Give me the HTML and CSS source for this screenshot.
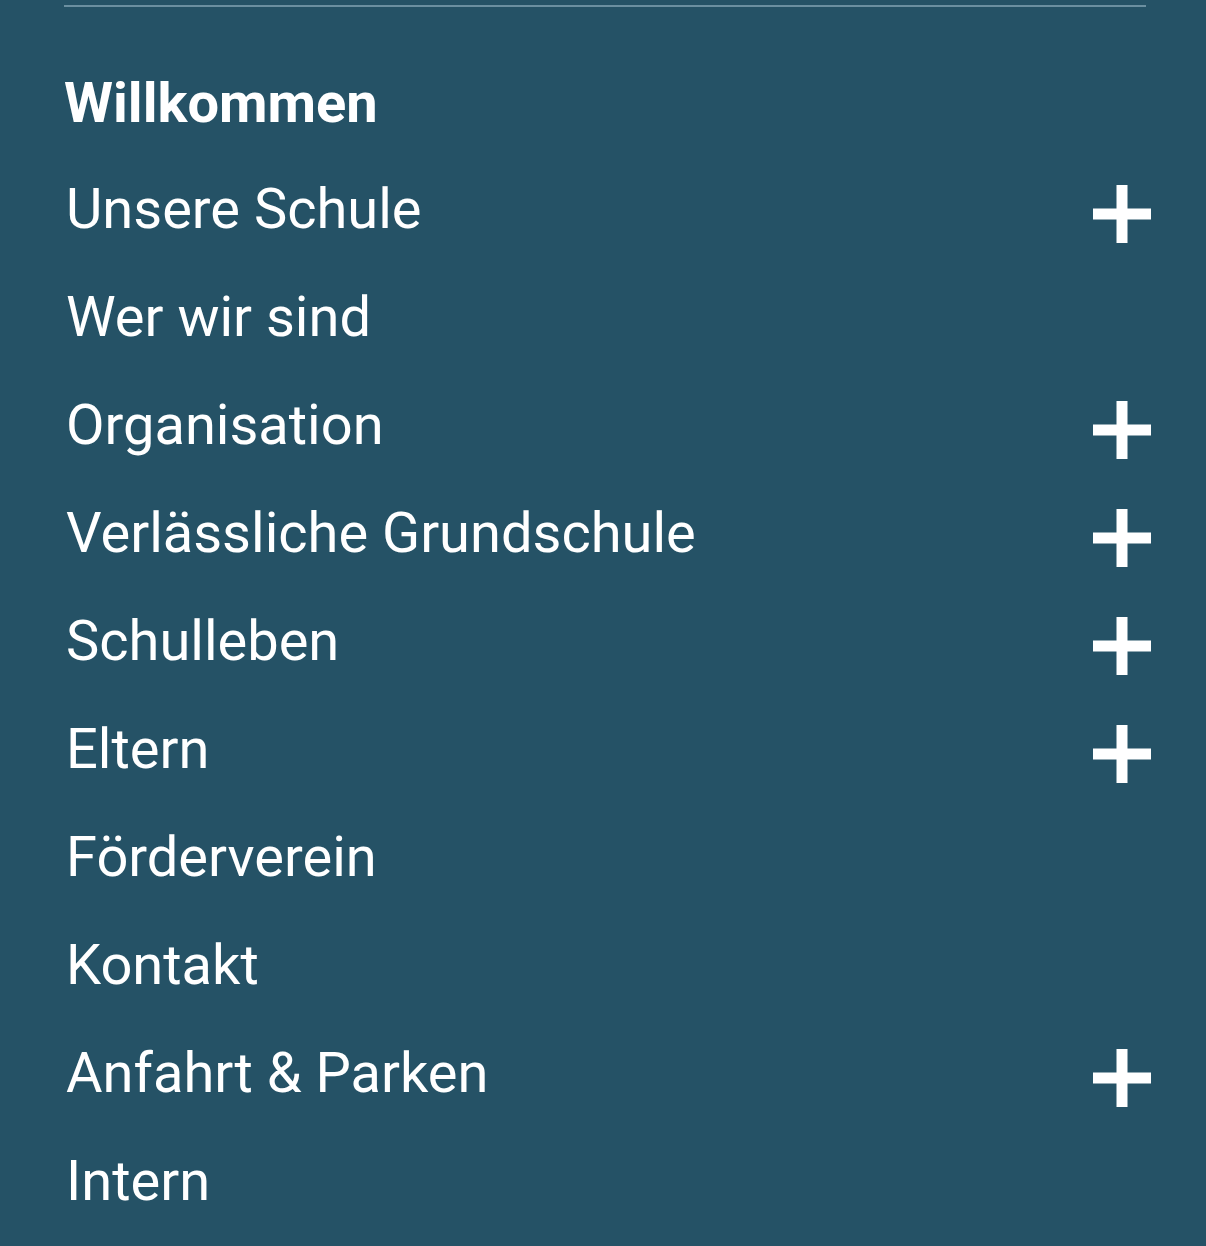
FILE: index.html
```html
<!DOCTYPE html>
<html lang="de">
<head>
    <meta charset="UTF-8">
    <meta name="viewport" content="width=device-width, initial-scale=1.0">
    <title>Menü</title>
    <link rel="stylesheet" href="styles.css">
</head>
<body>
    <nav class="menu">
        <ul class="menu-list">
            <li class="menu-item active"><a href="#">Willkommen</a></li>
            <li class="menu-item"><a href="#">Unsere Schule</a><span class="toggle"><svg viewBox="0 0 58 58"><path d="M23.5 0h11v23.5H58v11H34.5V58h-11V34.5H0v-11h23.5z"/></svg></span></li>
            <li class="menu-item"><a href="#">Wer wir sind</a></li>
            <li class="menu-item"><a href="#">Organisation</a><span class="toggle"><svg viewBox="0 0 58 58"><path d="M23.5 0h11v23.5H58v11H34.5V58h-11V34.5H0v-11h23.5z"/></svg></span></li>
            <li class="menu-item"><a href="#">Verlässliche Grundschule</a><span class="toggle"><svg viewBox="0 0 58 58"><path d="M23.5 0h11v23.5H58v11H34.5V58h-11V34.5H0v-11h23.5z"/></svg></span></li>
            <li class="menu-item"><a href="#">Schulleben</a><span class="toggle"><svg viewBox="0 0 58 58"><path d="M23.5 0h11v23.5H58v11H34.5V58h-11V34.5H0v-11h23.5z"/></svg></span></li>
            <li class="menu-item"><a href="#">Eltern</a><span class="toggle"><svg viewBox="0 0 58 58"><path d="M23.5 0h11v23.5H58v11H34.5V58h-11V34.5H0v-11h23.5z"/></svg></span></li>
            <li class="menu-item"><a href="#">Förderverein</a></li>
            <li class="menu-item"><a href="#">Kontakt</a></li>
            <li class="menu-item"><a href="#">Anfahrt &amp; Parken</a><span class="toggle"><svg viewBox="0 0 58 58"><path d="M23.5 0h11v23.5H58v11H34.5V58h-11V34.5H0v-11h23.5z"/></svg></span></li>
            <li class="menu-item"><a href="#">Intern</a></li>
        </ul>
    </nav>
</body>
</html>
```

FILE: styles.css
```css
body {
    font-family: Roboto, "Noto Sans", sans-serif;
    background-color: #255266;
    color: #ffffff;
    margin: 0;
    padding: 0;
}
.menu {
    padding: 0 60px 0 64px;
}
.menu-list {
    list-style: none;
    margin: 0;
    margin-top: 5px;
    padding: 40px 0 0;
    border-top: 2px solid #6b8fa0;
}
.menu-item {
    display: flex;
    align-items: center;
    justify-content: space-between;
    height: 108px;
}
.menu-item a {
    color: #ffffff;
    text-decoration: none;
    font-size: 56px;
    line-height: 108px;
    padding-left: 2px;
}
.menu-item.active a {
    font-weight: 700;
    padding-left: 0;
    padding-top: 4px;
}
.toggle {
    display: flex;
    margin-right: -5px;
    margin-top: 10px;
}
.toggle svg {
    width: 58px;
    height: 58px;
    fill: #ffffff;
}
```
